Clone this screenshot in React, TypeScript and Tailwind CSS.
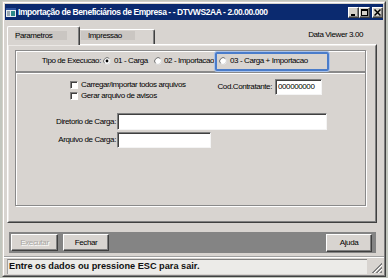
import React from "react";

function Radio({ checked }: { checked?: boolean }) {
  return (
    <svg width="8" height="8" viewBox="0 0 8 8" className="block shrink-0">
      <circle cx="4" cy="4" r="3.5" fill="#fff" />
      <path d="M1.53 6.47 A3.5 3.5 0 0 1 6.47 1.53" fill="none" stroke="#6e6e6e" strokeWidth="1" />
      <path d="M6.47 1.53 A3.5 3.5 0 0 1 1.53 6.47" fill="none" stroke="#d6d6d6" strokeWidth="1" />
      {checked && <circle cx="4" cy="4" r="1.4" fill="#000" />}
    </svg>
  );
}

function Check() {
  return (
    <div className="w-[8px] h-[8px] shrink-0 bg-white border border-t-[#808080] border-l-[#808080] border-r-white border-b-white shadow-[inset_1px_1px_0_#404040]" />
  );
}

function TitleBtn({ children }: { children: React.ReactNode }) {
  return (
    <div className="w-[11px] h-[11px] bg-[#d4d0c8] border border-t-white border-l-white border-r-[#404040] border-b-[#404040] shadow-[inset_-1px_-1px_0_#808080] flex items-center justify-center">
      {children}
    </div>
  );
}

export default function App() {
  return (
    <div className="w-[388px] h-[278px] bg-[#c2c6be] pt-[1px] pl-[2px] overflow-hidden text-[8px] leading-none tracking-[-0.4px] text-black font-['Liberation_Sans',Arial,sans-serif]">
      {/* window */}
      <div className="w-[384px] h-[276px] border border-t-[#d4d0c8] border-l-[#d4d0c8] border-r-[#404040] border-b-[#404040]">
        <div className="w-full h-full bg-[#d8d4d0] border border-t-white border-l-white border-r-[#808080] border-b-[#808080] flex flex-col">
          {/* title bar */}
          <div className="mx-[1px] mt-[1px] h-[16px] bg-[#0b2a6f] flex items-center">
            <svg width="10" height="9" viewBox="0 0 10 9" className="ml-[1px] shrink-0">
              <rect x="0" y="0" width="10" height="9" fill="#e8eef2" />
              <rect x="0" y="0" width="10" height="2" fill="#2a4f9a" />
              <rect x="1" y="3" width="3" height="5" fill="#9aa8b0" />
              <rect x="5" y="3" width="4" height="5" fill="#2e8a8a" />
            </svg>
            <span className="ml-[2px] text-white font-bold text-[8.5px] tracking-[-0.42px] whitespace-nowrap">
              Importação de Beneficiários de Empresa - - DTVWS2AA - 2.00.00.000
            </span>
            <div className="ml-auto flex items-center">
              <TitleBtn>
                <svg width="7" height="7" viewBox="0 0 7 7">
                  <rect x="1" y="5" width="4" height="2" fill="#000" />
                </svg>
              </TitleBtn>
              <TitleBtn>
                <svg width="7" height="7" viewBox="0 0 7 7">
                  <rect x="0.5" y="0.5" width="6" height="6" fill="none" stroke="#000" />
                  <rect x="0" y="0" width="7" height="2" fill="#000" />
                </svg>
              </TitleBtn>
              <div className="ml-[2px]">
                <TitleBtn>
                  <svg width="7" height="7" viewBox="0 0 7 7">
                    <path d="M0.5 0.5 L6.5 6.5 M6.5 0.5 L0.5 6.5" stroke="#000" strokeWidth="1.5" />
                  </svg>
                </TitleBtn>
              </div>
            </div>
          </div>

          {/* tab row */}
          <div className="mt-[6px] ml-[3px] h-[18px] flex items-end">
            <div className="relative z-10 -mb-[1px] w-[73px] h-[19px] bg-[#d8d4d0] border-t border-l border-r border-t-white border-l-white border-r-[#404040] shadow-[inset_-1px_0_0_#808080] rounded-t-[2px] pt-[4px] pl-[7px]">
              <div className="w-[52px] h-[9px] bg-[#cac6c2] flex items-center whitespace-nowrap">Parametros</div>
            </div>
            <div className="w-[75px] h-[15px] bg-[#d8d4d0] border-t border-r border-t-white border-r-[#404040] shadow-[inset_-1px_0_0_#808080] rounded-tr-[2px] pt-[1px] pl-[1px]">
              <div className="w-[54px] h-[9px] bg-[#cac6c2] flex items-center pl-[7px] whitespace-nowrap">Impressao</div>
            </div>
            <span className="self-center ml-auto mr-[21px] whitespace-nowrap">Data Viewer 3.00</span>
          </div>

          {/* tab panel */}
          <div className="ml-[3px] w-[370px] h-[179px] border border-t-white border-l-white border-r-[#404040] border-b-[#404040]">
            <div className="w-full h-full border border-t-[#ece9e6] border-l-[#ece9e6] border-r-[#808080] border-b-[#808080] pt-[4px] pl-[6px]">
              {/* group 1 */}
              <div className="w-[351px] h-[22px] border border-[#8a8a8a] shadow-[inset_1px_1px_0_#fff,1px_1px_0_#fff] flex items-center">
                <span className="ml-[25px] w-[60px] text-right whitespace-nowrap">Tipo de Execucao:</span>
                <div className="ml-[2px]"><Radio checked /></div>
                <span className="ml-[3px] w-[37px] whitespace-nowrap">01 - Carga</span>
                <div className="ml-[3px]"><Radio /></div>
                <span className="ml-[2px] w-[49px] whitespace-nowrap">02 - Importacao</span>
                <div className="ml-[2px] w-[114px] h-[19px] border-2 border-[#4a7cca] rounded-[2px] shadow-[0_0_0_1px_#a9c2ea] flex items-center pl-[2px]">
                  <Radio />
                  <span className="ml-[3px] whitespace-nowrap">03 - Carga + Importacao</span>
                </div>
              </div>

              {/* group 2 */}
              <div className="w-[351px] h-[134px] border border-[#8a8a8a] shadow-[inset_1px_1px_0_#fff,1px_1px_0_#fff] flex flex-col">
                <div className="mt-[6px] flex items-start">
                  <div className="ml-[54px] flex flex-col">
                    <div className="h-[11px] flex items-center">
                      <Check />
                      <span className="ml-[3px] whitespace-nowrap">Carregar/importar todos arquivos</span>
                    </div>
                    <div className="h-[11px] flex items-center">
                      <Check />
                      <span className="ml-[3px] whitespace-nowrap">Gerar arquivo de avisos</span>
                    </div>
                  </div>
                  <div className="ml-auto mr-[43px] h-[16px] flex items-center">
                    <span className="whitespace-nowrap">Cod.Contratante:</span>
                    <div className="ml-[3px] w-[47px] h-[16px] bg-white border border-t-[#808080] border-l-[#808080] border-r-[#f4f4f4] border-b-[#f4f4f4] shadow-[inset_1px_1px_0_#404040] flex items-center pl-[2px]">
                      000000000
                    </div>
                  </div>
                </div>
                <div className="mt-[12px] h-[17px] flex items-center">
                  <span className="w-[100px] text-right whitespace-nowrap">Diretorio de Carga:</span>
                  <div className="ml-[1px] w-[210px] h-[17px] bg-white border border-t-[#808080] border-l-[#808080] border-r-[#f4f4f4] border-b-[#f4f4f4] shadow-[inset_1px_1px_0_#404040]" />
                </div>
                <div className="mt-[2px] h-[16px] flex items-center">
                  <span className="w-[100px] text-right whitespace-nowrap">Arquivo de Carga:</span>
                  <div className="ml-[1px] w-[94px] h-[16px] bg-white border border-t-[#808080] border-l-[#808080] border-r-[#f4f4f4] border-b-[#f4f4f4] shadow-[inset_1px_1px_0_#404040]" />
                </div>
              </div>
            </div>
          </div>

          {/* button bar */}
          <div className="mt-[9px] ml-[5px] w-[367px] h-[21px] bg-[#848484] flex items-center">
            <div className="ml-[2px] w-[47px] h-[17px] bg-[#d8d4d0] border border-t-white border-l-white border-r-[#404040] border-b-[#404040] shadow-[inset_-1px_-1px_0_#808080] flex items-center justify-center text-[#a8a6a2] [text-shadow:1px_1px_0_#fff]">
              Executar
            </div>
            <div className="ml-[5px] w-[46px] h-[17px] bg-[#d8d4d0] border border-t-white border-l-white border-r-[#404040] border-b-[#404040] shadow-[inset_-1px_-1px_0_#808080] flex items-center justify-center">
              Fechar
            </div>
            <div className="ml-auto mr-[4px] w-[46px] h-[18px] bg-[#d8d4d0] border border-t-white border-l-white border-r-[#404040] border-b-[#404040] shadow-[inset_-1px_-1px_0_#808080] flex items-center justify-center">
              Ajuda
            </div>
          </div>

          {/* separator */}
          <div className="mt-[3px] h-[2px] border-t border-b border-t-[#a0a0a0] border-b-white" />

          {/* status */}
          <div className="mt-[1px] flex items-end">
            <div className="ml-[3px] w-[360px] h-[15px] bg-[#ecebe8] border-t border-l border-t-[#808080] border-l-[#a0a0a0] flex items-center pl-[1px]">
              <span className="font-bold text-[9.2px] tracking-[0px] whitespace-nowrap text-[#111]">
                Entre os dados ou pressione ESC para sair.
              </span>
            </div>
            <svg width="12" height="12" viewBox="0 0 12 12" className="ml-auto mr-[1px]">
              <path d="M11 1 L1 11 M11 2 L2 11" stroke="#808080" strokeWidth="1" />
              <path d="M11 3 L3 11" stroke="#fff" strokeWidth="1" />
              <path d="M11 5 L5 11 M11 6 L6 11" stroke="#808080" strokeWidth="1" />
              <path d="M11 7 L7 11" stroke="#fff" strokeWidth="1" />
              <path d="M11 9 L9 11 M11 10 L10 11" stroke="#808080" strokeWidth="1" />
            </svg>
          </div>
        </div>
      </div>
    </div>
  );
}
